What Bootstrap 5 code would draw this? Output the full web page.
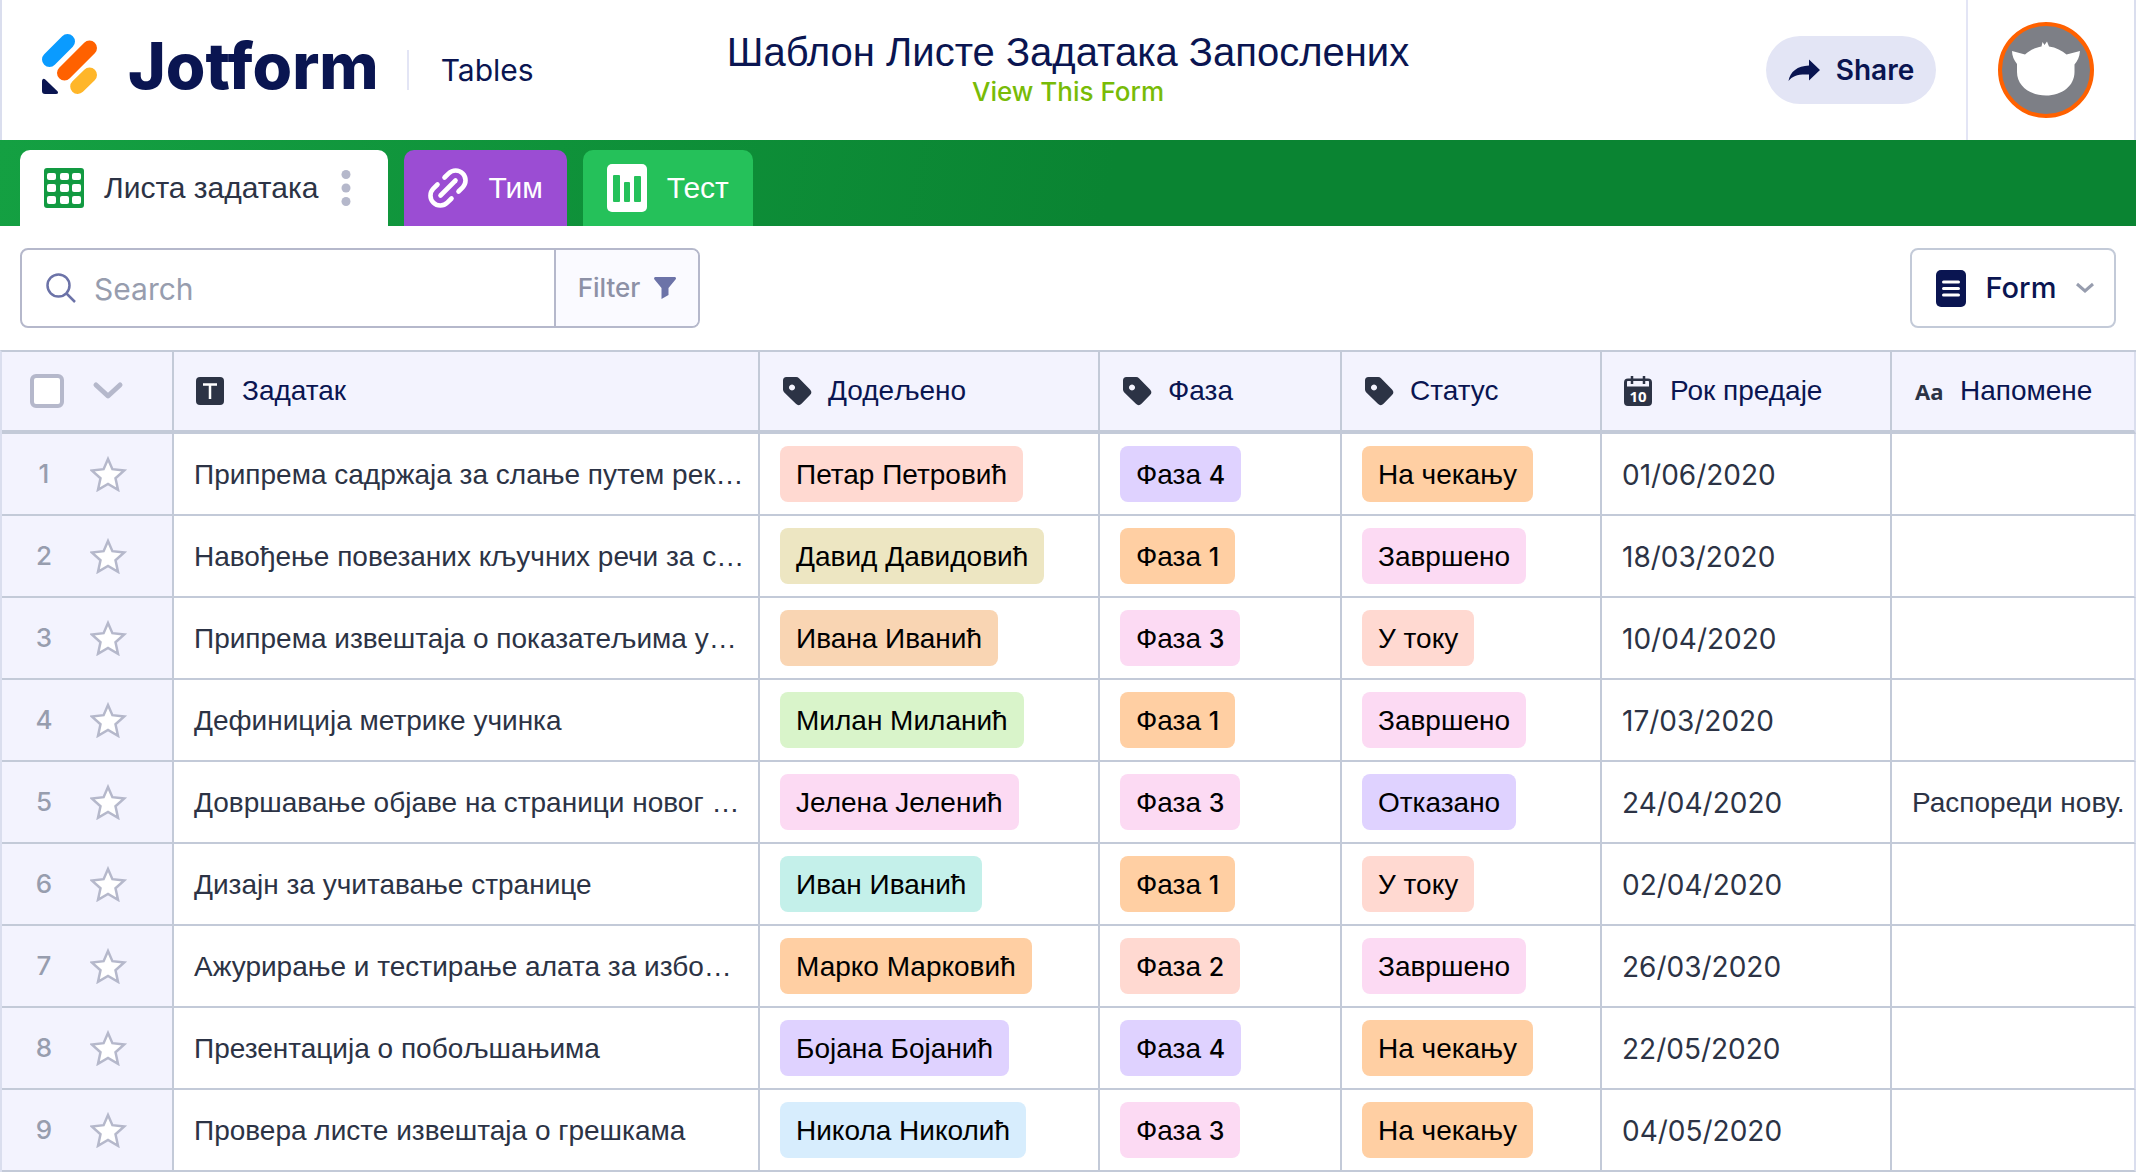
<!DOCTYPE html>
<html lang="sr">
<head>
<meta charset="utf-8">
<meta name="viewport" content="width=device-width, initial-scale=1">
<title>Шаблон Листе Задатака Запослених</title>
<link href="https://cdn.jsdelivr.net/npm/bootstrap@5.3.0/dist/css/bootstrap.min.css" rel="stylesheet">
<style>
  :root { --ink:#0a1551; --slate:#2c3345; --rule:#c3cad8; --edge:#dadeee; --mute:#b5b8cb; --pale:#f3f3fe; }
  body { font-family:Inter,"Liberation Sans",sans-serif; color:var(--slate); font-size:28px; line-height:40px; background:#fff; }
  .cyr { font-family:"Liberation Sans",sans-serif; }
  .num { font-family:Inter,"Liberation Sans",sans-serif; font-size:26px; font-weight:500; }
  svg { flex:none; display:block; }

  .app-top { height:140px; border-left:2px solid var(--edge); border-right:2px solid var(--edge); color:var(--ink); }
  .side-box { flex:1 1 0; }
  .brand { margin-left:40px; gap:30px; }
  .brand-word { font-size:64px; font-weight:800; line-height:72px; color:var(--ink); }
  .brand-rule { width:2px; height:40px; margin:0 32px 0 28px; background:#e3e5f5; }
  .product { font-size:30px; color:var(--ink); }
  .doc-title { font-size:40px; line-height:48px; font-weight:400; }
  .doc-link { font-size:26px; line-height:32px; font-weight:500; color:#78bb07; }
  .share { background:#e3e5f5; height:68px; width:170px; font-size:28px; font-weight:600; color:var(--ink); }
  .account { width:168px; margin-left:30px; padding-right:10px; border-left:2px solid #e3e5f5; }

  .tab-strip { height:86px; padding:10px 20px 0; gap:16px; background:linear-gradient(100deg,#14a042 0%,#0a8432 52%,#0a8432 100%); }
  .tab-strip .nav-link { height:76px; padding:0 24px; gap:20px; border:0; border-radius:10px 10px 0 0; color:#fff; font-size:30px; line-height:40px; }
  .tab-strip .nav-link.active { padding-right:34px; background:#fff; color:var(--slate); }
  .tab-team { background:#9b4dd3; }
  .tab-test { background:#25c15a; }

  .tools { padding:22px 20px; }
  .finder { width:680px; height:80px; border:2px solid var(--mute); border-radius:8px; overflow:hidden; }
  .finder input { font-size:30px; color:var(--slate); padding:2px 18px 0; }
  .finder input::placeholder { color:#979dae; opacity:1; }
  .filter { border:0; border-left:2px solid var(--mute); background:#fafaff; color:#8d91a6; font-size:26px; font-weight:500; width:144px; gap:14px; }
  .form-btn { height:80px; width:206px; padding:0 20px 0 24px; border:2px solid var(--rule); border-radius:8px; background:#fff; color:var(--ink); font-size:29px; font-weight:500; }

  .sheet { table-layout:fixed; width:100%; border-collapse:separate; border-spacing:0; border-top:2px solid var(--rule); border-left:2px solid var(--edge); white-space:nowrap; }
  .sheet th, .sheet td { border-right:2px solid var(--rule); border-bottom:2px solid var(--rule); padding:0 0 0 20px; vertical-align:middle; font-weight:400; }
  .sheet tr > :last-child { border-right-color:var(--edge); }
  .sheet thead th { height:82px; border-bottom-width:4px; background:var(--pale); color:var(--ink); padding:0 0 0 22px; }
  .sheet tbody td, .sheet tbody th { height:82px; }
  .sheet tbody .plain { padding-top:2px; }
  .sheet tbody .due { font-size:28px; }
  .sheet tbody th { background:var(--pale); }
  .sheet thead .pick, .sheet tbody .pick { padding:0 0 0 28px; }
  .pick .rownum { width:28px; color:#979dae; text-align:center; font-weight:500; }
  .pick .form-check-input { width:34px; height:34px; margin:0; border:4px solid var(--mute); border-radius:6px; }
  .star { border:0; background:none; padding:0; }
  .c1 { width:172px; } .c2 { width:586px; } .c3 { width:340px; } .c4 { width:242px; } .c5 { width:260px; } .c6 { width:290px; }
  .pill { display:inline-block; vertical-align:middle; height:56px; padding:9px 16px 7px; border-radius:8px; color:#000; }
  .pill .num { font-size:25px; }
  .rose { background:#ffd9d1; } .khaki { background:#ede6c2; } .peach { background:#f9d5b3; } .lime { background:#d9f4ca; }
  .pink { background:#fcdaf3; } .teal { background:#c4f0ea; } .amber { background:#ffcfa3; } .violet { background:#dfd2ff; } .sky { background:#d7edfd; }
</style>
<script src="https://cdn.jsdelivr.net/npm/bootstrap@5.3.0/dist/js/bootstrap.bundle.min.js"></script>
</head>
<body>
<svg width="0" height="0" class="position-absolute" aria-hidden="true">
  <symbol id="star" viewBox="0 0 38 36"><path d="M18 3l4.400 10.200 11.800 1.300-8.700 7.700 2.500 11.600L18 27.900l-10 5.900 2.500-11.600-8.700-7.700 11.800-1.300z" fill="#fff" stroke="#b5b8cb" stroke-width="2.500"/></symbol>
  <symbol id="tag" viewBox="0 0 30 30"><path d="M4.500 1h9.500a4 4 0 0 1 3 1.200l11 11.300a4 4 0 0 1 0 5.600l-8.500 8.700a4 4 0 0 1-5.600 0L2.300 16.500A4 4 0 0 1 1 13.500V4.500A3.500 3.500 0 0 1 4.500 1zm5.500 7.500a3 3 0 1 0 .01 0z" fill="#2c3345" fill-rule="evenodd"/></symbol>
</svg>

<header class="app-top d-flex align-items-center">
  <div class="side-box d-flex align-items-center">
    <a href="#" class="brand d-flex align-items-center text-decoration-none" aria-label="Jotform">
      <svg class="mb-3 mt-1" width="56" height="60" viewBox="0 0 56 60" fill="none" stroke-linecap="round" stroke-width="15"><path d="M7.500 25.500L25.500 7.500" stroke="#0a9bff"/><path d="M22.500 39L47.500 14" stroke="#ff6100"/><path d="M35.700 52.500L47.500 41" stroke="#ffb629"/><path d="M0 47.500v9.500a3 3 0 0 0 3 3h11c2 0 2.500-1.500 1.500-2.800L3 45.300c-1.300-1.200-3-.5-3 2.200z" fill="#0a1551"/></svg>
      <span class="brand-word pb-2">Jotform</span>
    </a>
    <span class="brand-rule"></span>
    <span class="product">Tables</span>
  </div>
  <div class="text-center pb-1">
    <h1 class="doc-title cyr mb-0">Шаблон Листе Задатака Запослених</h1>
    <a href="#" class="doc-link d-block text-decoration-none">View This Form</a>
  </div>
  <div class="side-box d-flex align-items-center justify-content-end align-self-stretch">
    <button type="button" class="btn share rounded-pill d-flex align-items-center justify-content-center gap-3 p-0">
      <svg width="32" height="24" viewBox="0 0 32 24"><path d="M21 1.500v6C9.500 8 2 13.500.5 23c4-5.500 10-7 20.500-6.500v6L32 12z" fill="#0a1551"/></svg>Share</button>
    <a href="#" class="account d-flex align-items-center justify-content-center align-self-stretch" aria-label="Account">
      <svg width="96" height="96" viewBox="0 0 96 96"><circle cx="48" cy="48" r="46" fill="#7d7f86" stroke="#ff6100" stroke-width="4"/><path d="M14 29l13 3.500C32 28 38 25.500 43.500 24.500L44.500 20l2 3 2.500-3.500 2 5C58 25.500 64 28.500 68.500 32.500L82 29c-.5 6-2.500 10-5.500 13.500V50C76.500 64 64 73.500 48 73.500S19 64 19 50v-8C16 38 14 34 14 29z" fill="#fff"/></svg>
    </a>
  </div>
</header>

<nav class="tab-strip nav cyr flex-nowrap" aria-label="Tabs">
  <a href="#" class="nav-link active d-flex align-items-center" aria-current="page">
    <svg width="40" height="40" viewBox="0 0 40 40"><rect width="40" height="40" rx="3" fill="#129a41"/><g fill="#fff"><rect x="3" y="5" width="9" height="7" rx="2"/><rect x="16" y="5" width="9" height="7" rx="2"/><rect x="28" y="5" width="9" height="7" rx="2"/><rect x="3" y="16" width="9" height="8" rx="2"/><rect x="16" y="16" width="9" height="8" rx="2"/><rect x="28" y="16" width="9" height="8" rx="2"/><rect x="3" y="28" width="9" height="8" rx="2"/><rect x="16" y="28" width="9" height="8" rx="2"/><rect x="28" y="28" width="9" height="8" rx="2"/></g></svg>
    Листа задатака
    <svg width="16" height="36" viewBox="0 0 16 36" fill="#b5b8cb"><circle cx="8" cy="4.500" r="4.500"/><circle cx="8" cy="18" r="4.500"/><circle cx="8" cy="31.500" r="4.500"/></svg>
  </a>
  <a href="#" class="nav-link tab-team d-flex align-items-center">
    <svg width="40" height="40" viewBox="0 0 40 40" fill="none" stroke="#fff" stroke-width="4.600" stroke-linecap="round"><path d="M12.500 27.500l15-15"/><path d="M16.500 9.500l4.200-4.200a9.900 9.900 0 0 1 14 14l-4.200 4.200"/><path d="M23.500 30.500l-4.200 4.200a9.900 9.900 0 0 1-14-14l4.200-4.200"/></svg>
    Тим</a>
  <a href="#" class="nav-link tab-test d-flex align-items-center">
    <svg width="40" height="48" viewBox="0 0 40 48"><rect width="40" height="48" rx="5" fill="#fff"/><g fill="#25c15a"><rect x="6" y="11" width="7" height="27" rx="1"/><rect x="17" y="18" width="6" height="20" rx="1"/><rect x="27" y="12" width="7" height="26" rx="1"/></g></svg>
    Тест</a>
</nav>

<main>
  <div class="tools d-flex justify-content-between">
    <form class="finder d-flex" role="search">
      <label for="q" class="d-flex align-items-center ps-4">
        <svg width="30" height="30" viewBox="0 0 30 30" fill="none" stroke="#6c73a8" stroke-width="2.500"><circle cx="12.500" cy="12.500" r="11"/><path d="M20.500 20.500L29 29"/></svg></label>
      <input id="q" type="search" class="form-control border-0 shadow-none h-100" placeholder="Search" aria-label="Search">
      <button type="button" class="filter flex-shrink-0 d-flex align-items-center justify-content-center">Filter
        <svg width="22" height="22" viewBox="0 0 22 22"><path d="M1.500 0h19c1.400 0 2 1.500 1 2.600L14.500 11v7l-7 4V11L.5 2.600C-.4 1.500.2 0 1.500 0z" fill="#6c73a8"/></svg></button>
    </form>
    <button type="button" class="form-btn d-flex align-items-center justify-content-between">
      <svg width="30" height="37" viewBox="0 0 30 37"><rect width="30" height="37" rx="5" fill="#0a1551"/><path d="M7.500 12h15M7.500 18.500h15M7.500 25h15" stroke="#fff" stroke-width="3" stroke-linecap="round"/></svg>
      Form
      <svg width="18" height="12" viewBox="0 0 18 12" fill="none" stroke="#979dae" stroke-width="3"><path d="M1 2l8 7 8-7"/></svg>
    </button>
  </div>

  <table class="sheet cyr">
    <colgroup><col class="c1"><col class="c2"><col class="c3"><col class="c4"><col class="c5"><col class="c6"><col></colgroup>
    <thead>
      <tr>
        <th class="pick"><div class="d-flex align-items-center">
          <input class="form-check-input" type="checkbox" aria-label="Select all">
          <svg class="ms-4" width="40" height="20" viewBox="0 0 40 20" fill="none" stroke="#b5b8cb" stroke-width="5" stroke-linecap="round" stroke-linejoin="round"><path d="M8 4l12 11L32 4"/></svg></div></th>
        <th scope="col"><div class="d-flex align-items-center gap-3"><svg width="30" height="28" viewBox="0 0 30 28"><rect width="28" height="28" rx="4" fill="#2c3345"/><path d="M7 7.500h14M14 7.500V22" stroke="#fff" stroke-width="2.500"/></svg>Задатак</div></th>
        <th scope="col"><div class="d-flex align-items-center gap-3"><svg width="30" height="30"><use href="#tag"/></svg>Додељено</div></th>
        <th scope="col"><div class="d-flex align-items-center gap-3"><svg width="30" height="30"><use href="#tag"/></svg>Фаза</div></th>
        <th scope="col"><div class="d-flex align-items-center gap-3"><svg width="30" height="30"><use href="#tag"/></svg>Статус</div></th>
        <th scope="col"><div class="d-flex align-items-center gap-3"><svg width="30" height="30" viewBox="0 0 30 30"><path d="M4 2.500h20a4 4 0 0 1 4 4V26a4 4 0 0 1-4 4H4a4 4 0 0 1-4-4V6.500a4 4 0 0 1 4-4zM3 6v4.500h22V6c0-.6-.4-1-1-1H4c-.6 0-1 .4-1 1z" fill="#2c3345" fill-rule="evenodd"/><path d="M8 0v8M20 0v8" stroke="#2c3345" stroke-width="2.500"/><text x="14" y="26" text-anchor="middle" font-family="Open Sans" font-weight="700" font-size="15" fill="#fff">10</text></svg>Рок предаје</div></th>
        <th scope="col"><div class="d-flex align-items-center gap-3"><svg width="30" height="30" viewBox="0 0 30 30"><text x="1" y="24" font-family="Open Sans" font-weight="700" font-size="22" fill="#2c3345">Aa</text></svg>Напомене</div></th>
      </tr>
    </thead>
    <tbody id="rows"></tbody>
  </table>
</main>
<script>
  // task, assignee, colour, phase, phase colour, status, status colour, due date, note
  const tasks = [
    ["Припрема садржаја за слање путем рек…", "Петар Петровић", "rose", 4, "violet", "На чекању", "amber", "01/06/2020", ""],
    ["Навођење повезаних кључних речи за с…", "Давид Давидовић", "khaki", 1, "amber", "Завршено", "pink", "18/03/2020", ""],
    ["Припрема извештаја о показатељима у…", "Ивана Иванић", "peach", 3, "pink", "У току", "rose", "10/04/2020", ""],
    ["Дефиниција метрике учинка", "Милан Миланић", "lime", 1, "amber", "Завршено", "pink", "17/03/2020", ""],
    ["Довршавање објаве на страници новог …", "Јелена Јеленић", "pink", 3, "pink", "Отказано", "violet", "24/04/2020", "Распореди нову."],
    ["Дизајн за учитавање странице", "Иван Иванић", "teal", 1, "amber", "У току", "rose", "02/04/2020", ""],
    ["Ажурирање и тестирање алата за избо…", "Марко Марковић", "amber", 2, "rose", "Завршено", "pink", "26/03/2020", ""],
    ["Презентација о побољшањима", "Бојана Бојанић", "violet", 4, "violet", "На чекању", "amber", "22/05/2020", ""],
    ["Провера листе извештаја о грешкама", "Никола Николић", "sky", 3, "pink", "На чекању", "amber", "04/05/2020", ""]
  ];
  document.getElementById("rows").innerHTML = tasks.map((t, i) => `
    <tr>
      <th scope="row" class="pick"><div class="d-flex align-items-center"><span class="rownum num">${i + 1}</span>
        <button type="button" class="star ms-4 ps-2" aria-label="Star"><svg width="38" height="36"><use href="#star"/></svg></button></div></th>
      <td class="plain">${t[0]}</td>
      <td><span class="pill ${t[2]}">${t[1]}</span></td>
      <td><span class="pill ${t[4]}">Фаза <span class="num">${t[3]}</span></span></td>
      <td><span class="pill ${t[6]}">${t[5]}</span></td>
      <td class="plain num due">${t[7]}</td>
      <td class="plain">${t[8]}</td>
    </tr>`).join("");
</script>
</body>
</html>
